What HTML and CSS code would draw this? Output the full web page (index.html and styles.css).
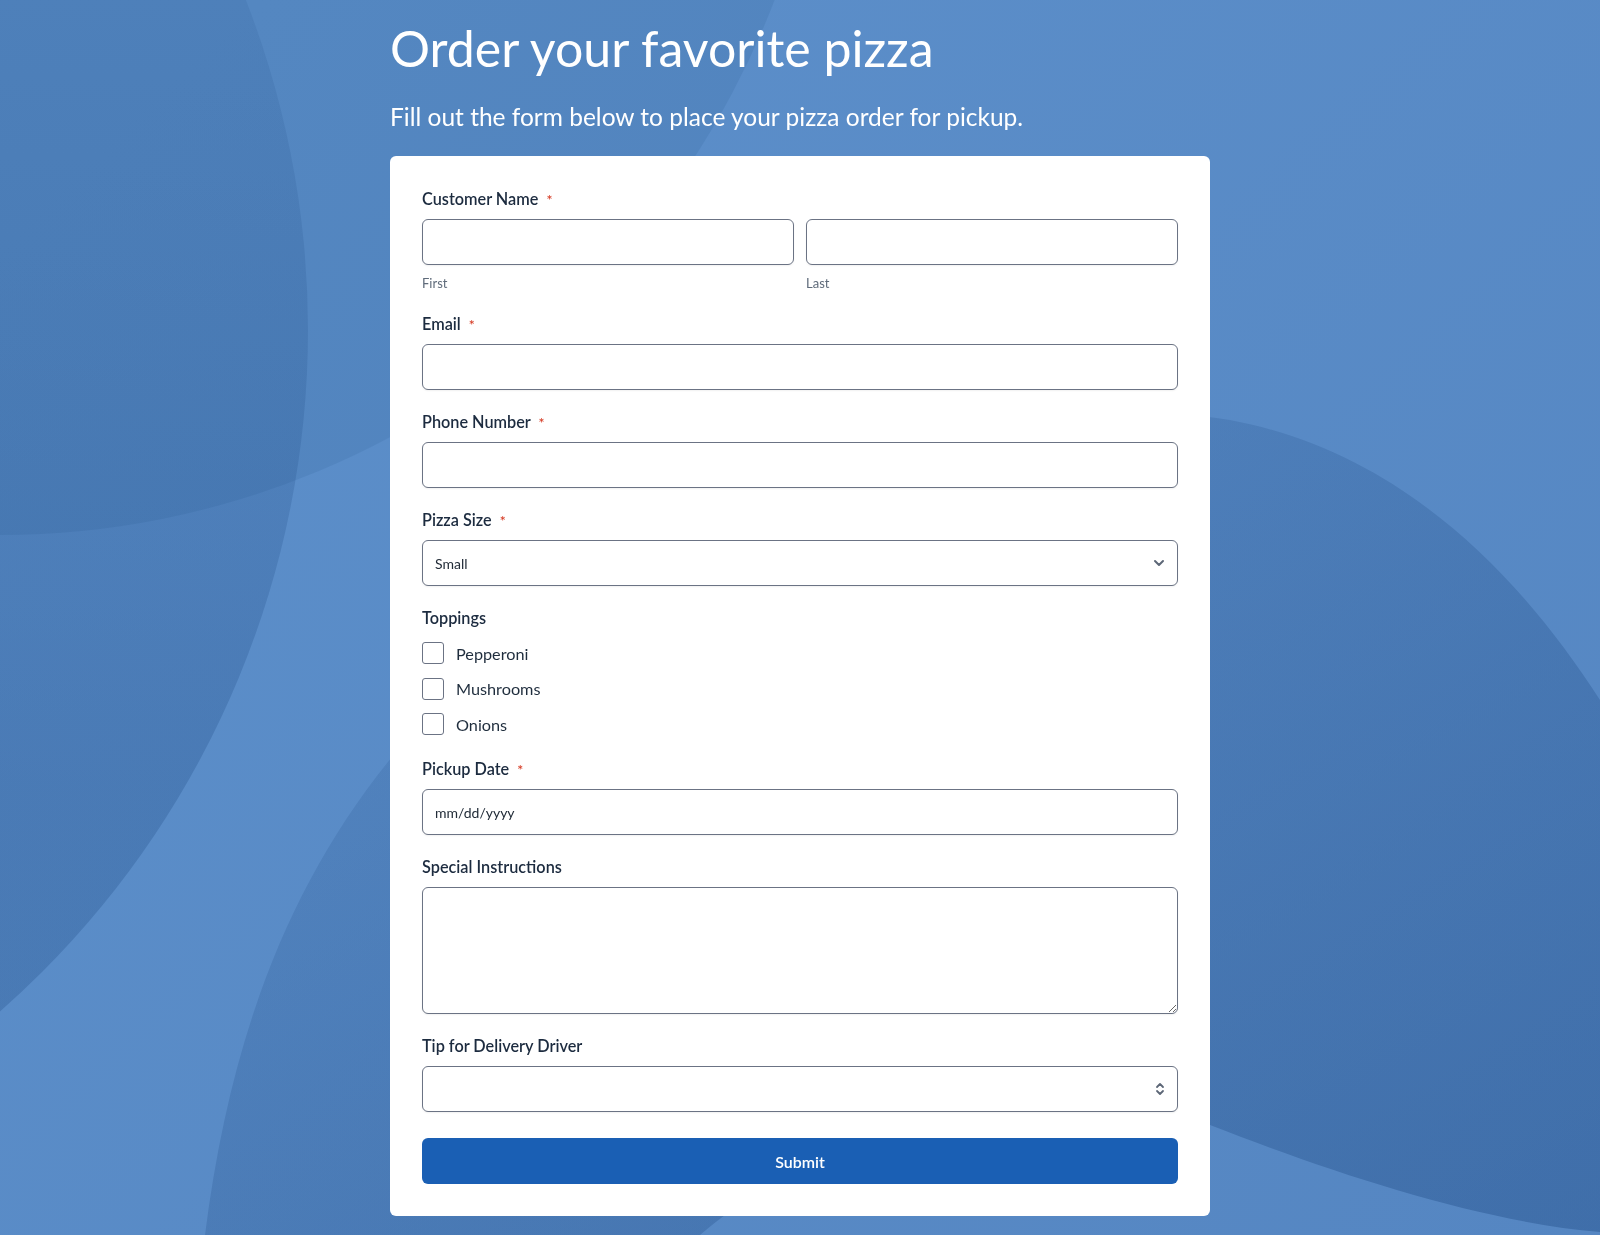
FILE: index.html
```html
<!DOCTYPE html>
<html lang="en">
<head>
    <meta charset="UTF-8">
    <meta name="viewport" content="width=device-width, initial-scale=1.0">
    <title>Pizza Order</title>
    <link rel="stylesheet" href="styles.css">
</head>
<body>
    <svg class="backdrop" viewBox="0 0 1600 1235" preserveAspectRatio="none" aria-hidden="true">
        <defs>
            <linearGradient id="baseFill" x1="0" y1="0.2" x2="1" y2="1">
                <stop offset="0" stop-color="#5c8fca"/>
                <stop offset="1" stop-color="#5586c2"/>
            </linearGradient>
            <linearGradient id="leftFill" x1="0" y1="0" x2="0" y2="1">
                <stop offset="0.2" stop-color="#15407a" stop-opacity="0.06"/>
                <stop offset="0.75" stop-color="#15407a" stop-opacity="0.24"/>
            </linearGradient>
            <linearGradient id="rightFill" x1="0" y1="0" x2="1" y2="1">
                <stop offset="0" stop-color="#15407a" stop-opacity="0.06"/>
                <stop offset="1" stop-color="#15407a" stop-opacity="0.34"/>
            </linearGradient>
        </defs>
        <rect width="1600" height="1235" fill="url(#baseFill)"/>
        <ellipse cx="0" cy="-300" rx="830" ry="835" fill="#15407a" fill-opacity="0.1"/>
        <circle cx="-600" cy="330" r="908" fill="url(#leftFill)"/>
        <path d="M205 1235 C240 960 340 760 560 600 C800 430 1050 390 1230 420 C1390 450 1510 560 1600 700 L1600 1232 C1480 1222 1330 1172 1210 1125 C1000 1060 800 1150 700 1235 Z" fill="url(#rightFill)"/>
    </svg>

    <div class="page">
        <h1 class="title">Order your favorite pizza</h1>
        <p class="intro">Fill out the form below to place your pizza order for pickup.</p>

        <form class="card" id="orderForm">
            <div class="field">
                <label class="label">Customer Name <span class="req">*</span></label>
                <div class="name-row">
                    <div class="name-col">
                        <input class="input" type="text" id="firstName">
                        <span class="hint">First</span>
                    </div>
                    <div class="name-col">
                        <input class="input" type="text" id="lastName">
                        <span class="hint">Last</span>
                    </div>
                </div>
            </div>

            <div class="field">
                <label class="label" for="email">Email <span class="req">*</span></label>
                <input class="input" type="email" id="email">
            </div>

            <div class="field">
                <label class="label" for="phone">Phone Number <span class="req">*</span></label>
                <input class="input" type="tel" id="phone">
            </div>

            <div class="field">
                <label class="label" for="size">Pizza Size <span class="req">*</span></label>
                <div class="control">
                    <select class="input select" id="size">
                        <option>Small</option>
                        <option>Medium</option>
                        <option>Large</option>
                    </select>
                    <svg class="control-icon" width="12" height="8" viewBox="0 0 12 8"><path d="M2 2 L6 6 L10 2" fill="none" stroke="#5d6777" stroke-width="2" stroke-linecap="round" stroke-linejoin="round"/></svg>
                </div>
            </div>

            <div class="field field-tight">
                <span class="label">Toppings</span>
                <div class="options">
                    <label class="option"><input type="checkbox" class="check"> Pepperoni</label>
                    <label class="option"><input type="checkbox" class="check"> Mushrooms</label>
                    <label class="option"><input type="checkbox" class="check"> Onions</label>
                </div>
            </div>

            <div class="field">
                <label class="label" for="pickup">Pickup Date <span class="req">*</span></label>
                <input class="input date" type="text" id="pickup" placeholder="mm/dd/yyyy">
            </div>

            <div class="field">
                <label class="label" for="notes">Special Instructions</label>
                <textarea class="input textarea" id="notes"></textarea>
            </div>

            <div class="field">
                <label class="label" for="tip">Tip for Delivery Driver</label>
                <div class="control">
                    <input class="input number" type="number" id="tip">
                    <svg class="control-icon" width="10" height="16" viewBox="0 0 10 16"><path d="M2 6 L5 3 L8 6 M2 10 L5 13 L8 10" fill="none" stroke="#5d6777" stroke-width="1.8" stroke-linecap="round" stroke-linejoin="round"/></svg>
                </div>
            </div>

            <button type="submit" class="submit">Submit</button>
        </form>
    </div>

    <script>
        document.getElementById('orderForm').addEventListener('submit', function(e) {
            e.preventDefault();
        });
    </script>
</body>
</html>
```

FILE: styles.css
```css
html {
    background-color: #5888c4;
}
body {
    margin: 0;
    font-family: Lato, "Open Sans", Arial, sans-serif;
    color: #1c2b3f;
    min-height: 1235px;
}
.backdrop {
    position: fixed;
    top: 0;
    left: 0;
    width: 100%;
    height: 100%;
    z-index: -1;
}
.page {
    width: 820px;
    margin: 0 auto;
    padding-top: 18px;
}
.title {
    margin: 0 0 24px;
    font-size: 50px;
    font-weight: 400;
    line-height: 60px;
    color: #ffffff;
}
.intro {
    margin: 0 0 25px;
    font-size: 24.5px;
    line-height: 29px;
    color: #ffffff;
}
.card {
    background: #ffffff;
    border-radius: 6px;
    padding: 32px;
}
.field {
    display: flex;
    flex-direction: column;
    margin-bottom: 21px;
}
.label {
    display: block;
    height: 22px;
    font-size: 16.25px;
    font-weight: 600;
    line-height: 22px;
    margin-bottom: 9px;
    color: #1c2b3f;
}
.req {
    color: #d7402a;
    font-size: 14px;
    line-height: 1;
    margin-left: 4px;
}
.name-row {
    display: grid;
    grid-template-columns: 1fr 1fr;
    gap: 12px;
}
.name-col {
    display: flex;
    flex-direction: column;
}
.hint {
    margin-top: 9px;
    font-size: 13px;
    line-height: 18px;
    color: #5f6b7a;
}
.input {
    box-sizing: border-box;
    width: 100%;
    height: 46px;
    margin: 0;
    padding: 0 12px;
    border: 1px solid #6b7384;
    border-radius: 6px;
    background: #ffffff;
    box-shadow: 0 1px 2px rgba(0, 0, 0, 0.06);
    font-family: Lato, "Open Sans", Arial, sans-serif;
    font-size: 14px;
    color: #222c38;
    outline: none;
}
.input::placeholder {
    color: #222c38;
    opacity: 1;
}
.control {
    position: relative;
}
.control-icon {
    position: absolute;
    right: 13px;
    top: 50%;
    transform: translateY(-50%);
    pointer-events: none;
}
.select {
    appearance: none;
    -webkit-appearance: none;
}
.number {
    -moz-appearance: textfield;
}
.number::-webkit-inner-spin-button,
.number::-webkit-outer-spin-button {
    -webkit-appearance: none;
    margin: 0;
}
.textarea {
    height: 127px;
    padding: 10px 12px;
    resize: vertical;
}
.field-tight .options {
    display: flex;
    flex-direction: column;
    gap: 9.5px;
    padding-top: 2px;
}
.option {
    display: flex;
    align-items: center;
    gap: 12px;
    height: 26px;
    font-size: 16.25px;
    color: #1f2d3d;
}
.check {
    appearance: none;
    -webkit-appearance: none;
    box-sizing: border-box;
    width: 22px;
    height: 22px;
    margin: 0;
    border: 1px solid #6b7384;
    border-radius: 3px;
    background: #ffffff;
}
.check:checked {
    background: #1a5fb4;
    border-color: #1a5fb4;
}
.submit {
    display: block;
    width: 100%;
    height: 46px;
    margin-top: 26px;
    border: none;
    border-radius: 6px;
    background-color: #1a5fb4;
    color: #ffffff;
    font-family: Lato, "Open Sans", Arial, sans-serif;
    font-size: 16px;
    font-weight: 600;
    cursor: pointer;
}
.submit:hover {
    background-color: #154f98;
}
```
